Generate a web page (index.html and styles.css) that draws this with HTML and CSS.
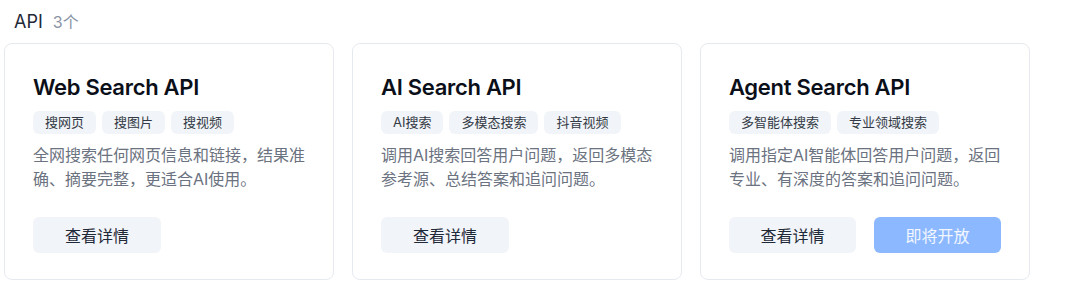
FILE: index.html
```html
<!DOCTYPE html>
<html lang="zh-CN">
<head>
  <meta charset="UTF-8">
  <title>API</title>
  <link rel="stylesheet" href="styles.css">
</head>
<body>
<div class="section">
  <div class="section-head">
    <span class="section-title">API</span>
    <span class="section-count">3个</span>
  </div>

  <div class="cards">
    <div class="card">
      <h3 class="card-title">Web Search API</h3>
      <div class="tags">
        <span class="tag">搜网页</span>
        <span class="tag">搜图片</span>
        <span class="tag">搜视频</span>
      </div>
      <p class="card-desc">全网搜索任何网页信息和链接，结果准确、摘要完整，更适合AI使用。</p>
      <div class="actions">
        <button class="btn btn-light">查看详情</button>
      </div>
    </div>

    <div class="card">
      <h3 class="card-title">AI Search API</h3>
      <div class="tags">
        <span class="tag">AI搜索</span>
        <span class="tag">多模态搜索</span>
        <span class="tag">抖音视频</span>
      </div>
      <p class="card-desc">调用AI搜索回答用户问题，返回多模态参考源、总结答案和追问问题。</p>
      <div class="actions">
        <button class="btn btn-light">查看详情</button>
      </div>
    </div>

    <div class="card">
      <h3 class="card-title">Agent Search API</h3>
      <div class="tags">
        <span class="tag">多智能体搜索</span>
        <span class="tag">专业领域搜索</span>
      </div>
      <p class="card-desc">调用指定AI智能体回答用户问题，返回专业、有深度的答案和追问问题。</p>
      <div class="actions">
        <button class="btn btn-light">查看详情</button>
        <button class="btn btn-primary" disabled>即将开放</button>
      </div>
    </div>
  </div>
</div>
</body>
</html>
```

FILE: styles.css
```css
* {
  margin: 0;
  padding: 0;
  box-sizing: border-box;
}

body {
  font-family: Inter, "Noto Sans CJK SC", sans-serif;
  background: #fff;
  color: #111827;
}

.section {
  padding: 9px 0 0 4px;
}

.section-head {
  display: flex;
  align-items: baseline;
  gap: 10px;
  padding-left: 10px;
  height: 24px;
  margin-bottom: 10px;
}

.section-title {
  font-size: 18px;
  color: #1f2937;
}

.section-count {
  font-size: 16px;
  color: #8a94a6;
}

.cards {
  display: grid;
  grid-template-columns: repeat(3, 330px);
  gap: 18px;
}

.card {
  border: 1px solid #e6eaf0;
  border-radius: 8px;
  padding: 28px 28px 26px;
  display: flex;
  flex-direction: column;
}

.card-title {
  font-size: 22px;
  font-weight: 600;
  line-height: 30px;
  color: #0b0f19;
  letter-spacing: -0.3px;
}

.tags {
  display: flex;
  gap: 6px;
  margin-top: 9px;
}

.tag {
  background: #f1f4f8;
  border-radius: 6px;
  font-size: 13px;
  line-height: 23px;
  padding: 0 12px;
  color: #333a45;
}

.card-desc {
  margin-top: 9px;
  font-size: 16px;
  line-height: 24px;
  color: #6b7280;
  min-height: 48px;
}

.actions {
  display: flex;
  gap: 18px;
  margin-top: 26px;
}

.btn {
  width: 128px;
  height: 36px;
  border: none;
  border-radius: 6px;
  font-family: inherit;
  font-size: 16px;
  cursor: pointer;
}

.btn-light {
  background: #f1f4f8;
  color: #1f2937;
}

.btn-primary {
  background: #8cb8ff;
  color: #f3f7ff;
  cursor: default;
}
```
